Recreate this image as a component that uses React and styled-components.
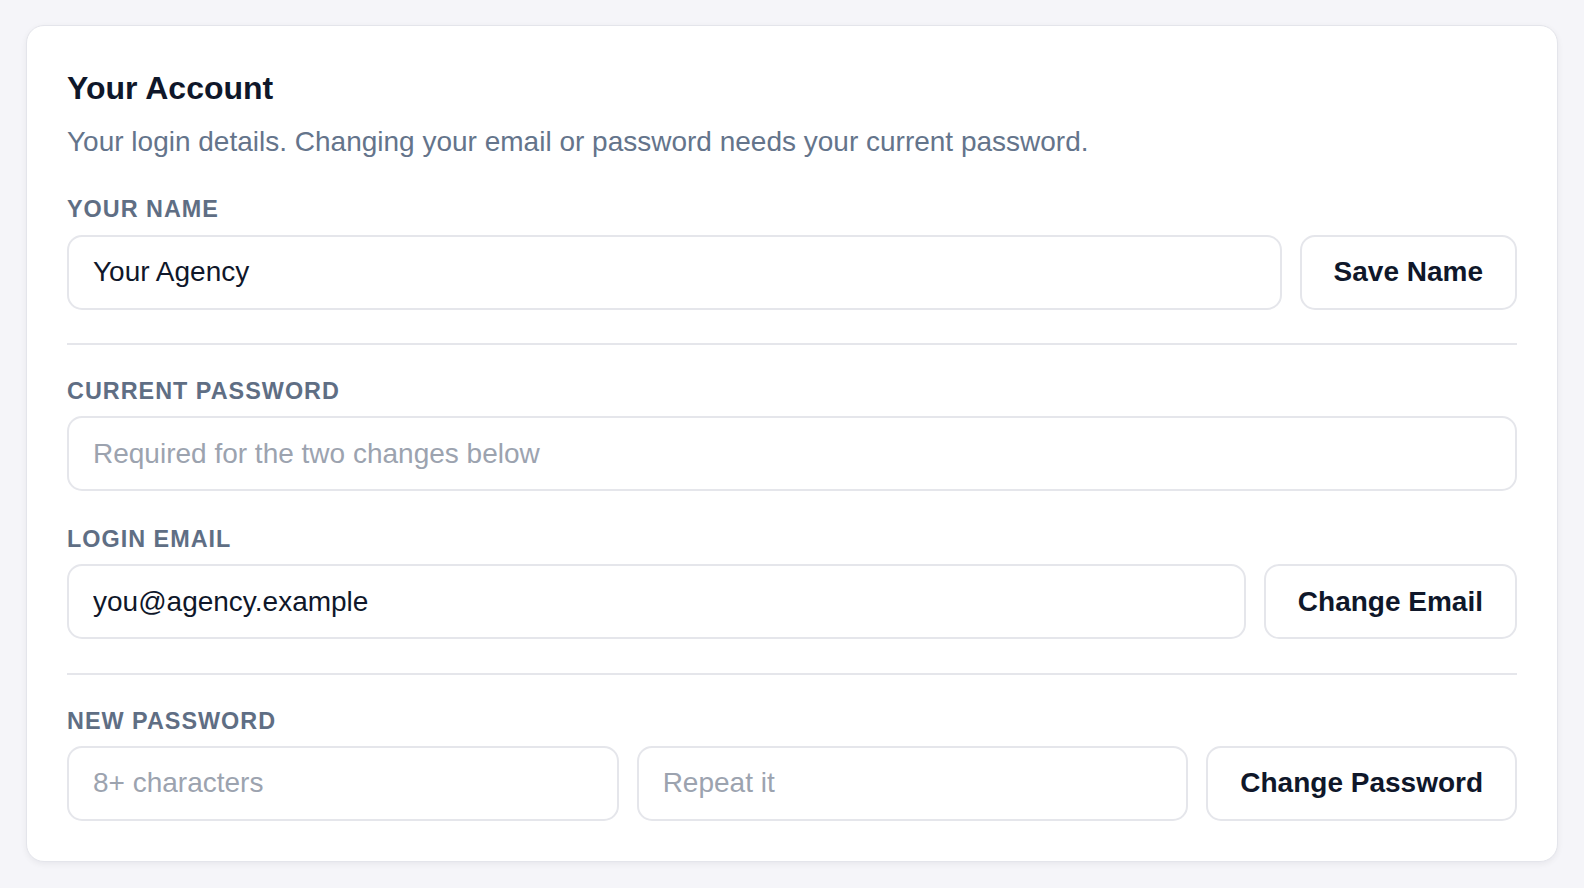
import React, { useState } from "react";
import styled, { createGlobalStyle } from "styled-components";

const GlobalStyle = createGlobalStyle`
  * { box-sizing: border-box; }
  body {
    margin: 0;
    background: #f5f5f9;
    font-family: "Liberation Sans", Arial, sans-serif;
  }
`;

const Page = styled.div`
  padding: 25px 26px;
`;

const Card = styled.section`
  background: #fff;
  border: 1px solid #e4e5eb;
  border-radius: 18px;
  box-shadow: 0 2px 6px rgba(15, 23, 42, 0.06);
  padding: 40px;
`;

const Title = styled.h2`
  margin: 3px 0 0;
  font-size: 32px;
  line-height: 38.4px;
  font-weight: 700;
  color: #0f172a;
`;

const Subtitle = styled.p`
  margin: 14.5px 0 34px;
  font-size: 28px;
  line-height: 40.5px;
  color: #64748b;
`;

const Section = styled.div`
  display: flex;
  flex-direction: column;
  gap: 35px;
`;

const Field = styled.div`
  display: flex;
  flex-direction: column;
`;

const Label = styled.label`
  font-size: 23.4px;
  line-height: 27.6px;
  font-weight: 700;
  letter-spacing: 1px;
  text-transform: uppercase;
  color: #5f6e84;
  margin-bottom: 10.5px;
`;

const Row = styled.div`
  display: flex;
  gap: 18px;
`;

const Input = styled.input`
  flex: 1;
  min-width: 0;
  height: 75px;
  padding: 0 24px;
  border: 2px solid #e5e6eb;
  border-radius: 15px;
  background: #fff;
  font-family: inherit;
  font-size: 28px;
  color: #0f172a;
  outline: none;

  &::placeholder {
    color: #9ca3af;
  }
`;

const Button = styled.button`
  flex: none;
  height: 75px;
  padding: 0 32px;
  border: 2px solid #e5e6eb;
  border-radius: 15px;
  background: #fff;
  font-family: inherit;
  font-size: 28px;
  font-weight: 700;
  color: #0f172a;
  cursor: pointer;
`;

const Divider = styled.hr`
  margin: 33.5px 0 33px;
  border: 0;
  height: 2px;
  background: #e5e6eb;
`;

export default function App() {
  const [name, setName] = useState("Your Agency");
  const [email, setEmail] = useState("you@agency.example");

  return (
    <>
      <GlobalStyle />
      <Page>
        <Card>
          <Title>Your Account</Title>
          <Subtitle>
            Your login details. Changing your email or password needs your current password.
          </Subtitle>

          <Field>
            <Label>Your Name</Label>
            <Row>
              <Input value={name} onChange={(e) => setName(e.target.value)} />
              <Button>Save Name</Button>
            </Row>
          </Field>

          <Divider />

          <Section>
            <Field>
              <Label>Current Password</Label>
              <Row>
                <Input type="password" placeholder="Required for the two changes below" />
              </Row>
            </Field>
            <Field>
              <Label>Login Email</Label>
              <Row>
                <Input value={email} onChange={(e) => setEmail(e.target.value)} />
                <Button>Change Email</Button>
              </Row>
            </Field>
          </Section>

          <Divider />

          <Field>
            <Label>New Password</Label>
            <Row>
              <Input type="password" placeholder="8+ characters" />
              <Input type="password" placeholder="Repeat it" />
              <Button>Change Password</Button>
            </Row>
          </Field>
        </Card>
      </Page>
    </>
  );
}
